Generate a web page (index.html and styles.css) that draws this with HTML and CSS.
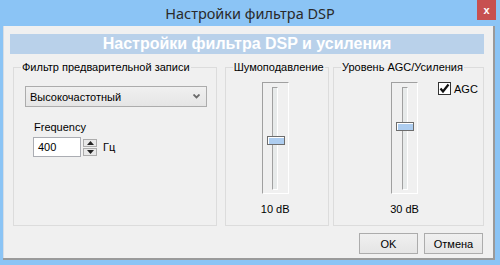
FILE: index.html
```html
<!DOCTYPE html>
<html lang="ru">
<head>
    <meta charset="UTF-8">
    <title>Настройки фильтра DSP</title>
    <link rel="stylesheet" href="styles.css">
</head>
<body>
    <div class="window">
        <div class="titlebar">
            <span></span>
            <span class="title">Настройки фильтра DSP</span>
            <button class="close">x</button>
        </div>
        <div class="client">
            <div class="banner">Настройки фильтра DSP и усиления</div>

            <div class="groups">
                <fieldset class="group group-filter">
                    <legend>Фильтр предварительной записи</legend>
                    <div class="combo">
                        <span>Высокочастотный</span>
                        <svg class="chevron" width="7" height="5" viewBox="0 0 7 5">
                            <path d="M0.5 0.5 L3.5 3.5 L6.5 0.5" fill="none" stroke="#6a6a6a" stroke-width="1.8"/>
                        </svg>
                    </div>
                    <div class="freq-label">Frequency</div>
                    <div class="freq-row">
                        <div class="num-input">400</div>
                        <div class="spin">
                            <button class="spin-btn">
                                <svg width="7" height="4" viewBox="0 0 7 4"><path d="M0 4 L3.5 0 L7 4 Z" fill="#222"/></svg>
                            </button>
                            <button class="spin-btn">
                                <svg width="7" height="4" viewBox="0 0 7 4"><path d="M0 0 L3.5 4 L7 0 Z" fill="#222"/></svg>
                            </button>
                        </div>
                        <span class="unit">Гц</span>
                    </div>
                </fieldset>

                <fieldset class="group group-noise">
                    <legend>Шумоподавление</legend>
                    <div class="slider-col">
                        <div class="slider">
                            <div class="groove"></div>
                            <div class="thumb" style="top: 53px;"></div>
                        </div>
                        <div class="slider-value">10 dB</div>
                    </div>
                </fieldset>

                <fieldset class="group group-agc">
                    <legend>Уровень AGC/Усиления</legend>
                    <div class="agc-row">
                        <div class="slider-col">
                            <div class="slider">
                                <div class="groove"></div>
                                <div class="thumb" style="top: 39px;"></div>
                            </div>
                            <div class="slider-value">30 dB</div>
                        </div>
                        <label class="check">
                            <span class="check-box">
                                <svg width="11" height="11" viewBox="0 0 11 11">
                                    <path d="M1.5 5.5 L4 8.5 L9.5 1.5" fill="none" stroke="#111" stroke-width="2.2"/>
                                </svg>
                            </span>
                            AGC
                        </label>
                    </div>
                </fieldset>
            </div>

            <div class="buttons">
                <button class="btn">OK</button>
                <button class="btn">Отмена</button>
            </div>
        </div>
    </div>
</body>
</html>
```

FILE: styles.css
```css
body {
    margin: 0;
    width: 500px;
    height: 265px;
    background: #8bc4f5;
    font-family: "Liberation Sans", Arial, sans-serif;
    font-size: 11px;
    color: #000;
    overflow: hidden;
}
.titlebar {
    height: 26px;
    display: grid;
    grid-template-columns: 1fr auto 1fr;
    align-items: start;
}
.title {
    font-family: "Noto Sans", sans-serif;
    font-size: 14.5px;
    line-height: 26px;
    color: #2a2a2a;
}
.close {
    justify-self: end;
    margin-right: 4px;
    width: 19px;
    height: 20px;
    padding: 0;
    border: none;
    background: #c75050;
    color: #fff;
    font-family: "Liberation Sans", sans-serif;
    font-weight: bold;
    font-size: 11px;
    line-height: 18px;
}
.client {
    margin-left: 3px;
    width: 492px;
    height: 234px;
    box-sizing: border-box;
    padding: 8px 9px 0 7px;
    background: #f0f0f0;
    border-right: 2px solid #9a9a9a;
    border-bottom: 2px solid #9a9a9a;
    box-shadow: inset 1px 0 0 #d6dde5;
}
.banner {
    height: 20px;
    line-height: 20px;
    background: #b9d1ea;
    color: #fff;
    font-weight: bold;
    font-size: 16px;
    text-align: center;
}
.groups {
    display: flex;
    margin-top: 7px;
    margin-left: 3px;
}
.group {
    margin: 0;
    padding: 0;
    height: 165px;
    box-sizing: border-box;
    border: 1px solid #dcdcdc;
    min-width: 0;
}
.group legend {
    margin-left: 7px;
    padding: 0 1px;
    line-height: 13px;
}
.group-filter {
    width: 205px;
    margin-right: 8px;
}
.group-noise {
    width: 105px;
    margin-right: 4px;
}
.group-agc {
    width: 152px;
}
.combo {
    margin: 12px 0 0 11px;
    width: 182px;
    height: 21px;
    box-sizing: border-box;
    border: 1px solid #acacac;
    background: linear-gradient(#f0f0f0, #e5e5e5);
    display: flex;
    align-items: center;
    justify-content: space-between;
    padding: 0 6px 0 4px;
}
.freq-label {
    margin: 14px 0 0 20px;
    line-height: 13px;
}
.freq-row {
    display: flex;
    align-items: center;
    margin: 3px 0 0 19px;
}
.num-input {
    width: 48px;
    height: 20px;
    box-sizing: border-box;
    border: 1px solid #abadb3;
    background: #fff;
    padding-left: 4px;
    line-height: 18px;
}
.spin {
    display: flex;
    flex-direction: column;
    gap: 1px;
    margin-left: 2px;
}
.spin-btn {
    width: 14px;
    height: 8px;
    padding: 0;
    border: 1px solid #acacac;
    background: #e8e8e8;
    display: flex;
    align-items: center;
    justify-content: center;
}
.unit {
    margin-left: 6px;
}
.slider-col {
    display: flex;
    flex-direction: column;
    align-items: center;
    width: 31px;
    margin-top: 8px;
}
.group-noise .slider-col {
    margin-left: 34px;
}
.slider {
    position: relative;
    width: 27px;
    height: 112px;
    box-sizing: border-box;
    border-top: 1px solid #a0a0a0;
    border-left: 1px solid #a0a0a0;
    border-right: 1px solid #fff;
    border-bottom: 1px solid #fff;
    display: flex;
    justify-content: center;
    padding-top: 4px;
}
.groove {
    width: 6px;
    height: 103px;
    box-sizing: border-box;
    border-top: 1px solid #a0a0a0;
    border-left: 1px solid #a0a0a0;
    border-right: 1px solid #fff;
    border-bottom: 1px solid #fff;
    background: #e7eaea;
}
.thumb {
    position: absolute;
    left: 4px;
    width: 18px;
    height: 9px;
    box-sizing: border-box;
    border: 1px solid #6d6d6d;
    background: #adcdf0;
    box-shadow: inset 1px 1px 0 #fff;
}
.slider-value {
    margin-top: 9px;
    line-height: 13px;
    white-space: nowrap;
}
.agc-row {
    display: flex;
    align-items: flex-start;
    padding-left: 55px;
}
.check {
    display: flex;
    align-items: center;
    margin: 8px 0 0 18px;
}
.check-box {
    width: 13px;
    height: 13px;
    box-sizing: border-box;
    border: 1px solid #333;
    background: #fff;
    display: flex;
    align-items: center;
    justify-content: center;
    margin-right: 3px;
}
.buttons {
    display: flex;
    justify-content: flex-end;
    gap: 6px;
    margin-top: 7px;
    margin-right: 1px;
}
.btn {
    width: 59px;
    height: 21px;
    padding: 0;
    border: 1px solid #acacac;
    background: linear-gradient(#f0f0f0, #e5e5e5);
    font-family: "Liberation Sans", Arial, sans-serif;
    font-size: 11px;
    color: #000;
}
```
